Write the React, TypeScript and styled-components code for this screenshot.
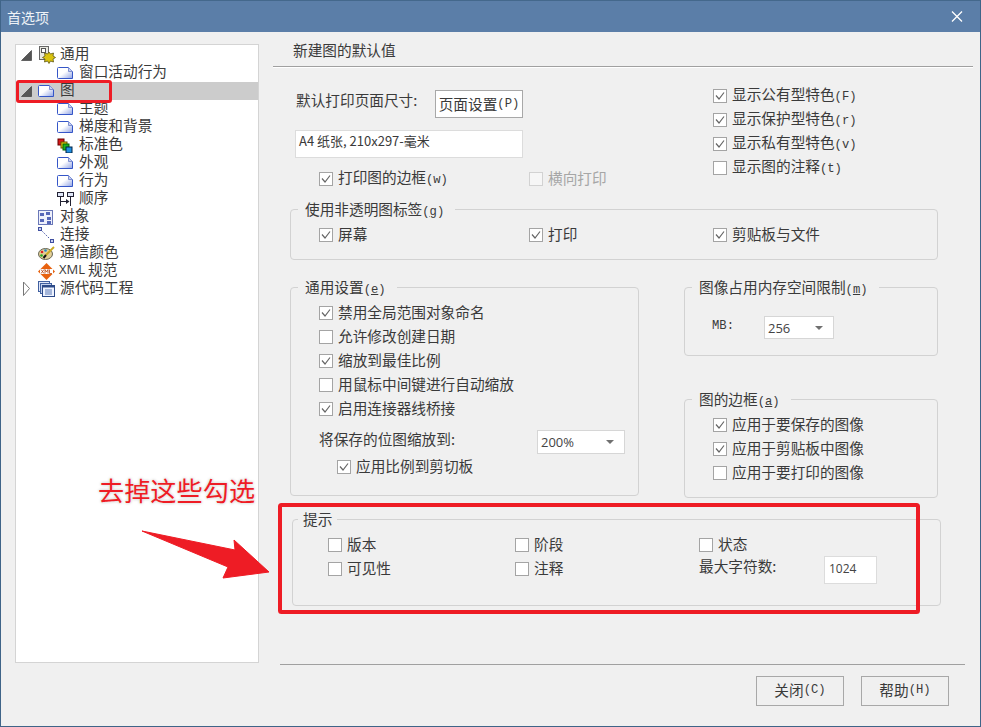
import React from "react";
import styled, { createGlobalStyle } from "styled-components";

const Global = createGlobalStyle`
  html, body { margin: 0; padding: 0; background: #f0f0f0; }
  * { box-sizing: border-box; }
`;

const CJK = `"Noto Sans CJK SC", "Liberation Sans", sans-serif`;

const Window = styled.div`
  position: relative;
  width: 981px;
  height: 727px;
  display: flex;
  flex-direction: column;
  background: #f0f0f0;
  border: 1px solid #3f6488;
  border-top-color: #44688c;
  font: 14.67px/18px ${CJK};
  color: #3a3a3a;
  overflow: hidden;
`;
const TitleBar = styled.div`
  height: 31px;
  flex: none;
  background: #5b7ea8;
  display: flex;
  align-items: center;
  justify-content: space-between;
  padding: 0 17px 0 6px;
  color: #eef2f7;
  font-size: 14px;
`;
const Body = styled.div`
  flex: 1;
  display: flex;
  align-items: flex-start;
`;
const Tree = styled.div`
  width: 244px;
  height: 619px;
  margin: 12px 0 0 14px;
  padding-top: 1px;
  background: #fff;
  border: 1px solid #d4d4d4;
  flex: none;
`;
const TreeRow = styled.div<{ $level: number; $selected?: boolean }>`
  height: 18px;
  display: flex;
  align-items: center;
  padding-left: ${(p) => (p.$level === 0 ? 5 : 41)}px;
  background: ${(p) => (p.$selected ? "#cccccc" : "transparent")};
  white-space: nowrap;
`;
const Expander = styled.span`
  width: 17px;
  height: 18px;
  flex: none;
  display: flex;
  align-items: center;
`;
const TreeIcon = styled.span`
  width: 18px;
  height: 18px;
  flex: none;
  display: flex;
  align-items: center;
  margin-right: 4px;
`;
const TreeLabel = styled.span`
  padding-bottom: 4px;
  display: flex;
  align-items: center;
`;
const Latin = styled.span`
  font-family: "Open Sans", sans-serif;
  font-size: 13px;
  margin: 0 3px 0 -1px;
  color: #3a3a3a;
`;

const Pane = styled.div`
  width: 700px;
  margin-left: 14px;
  flex: none;
`;
const Header = styled.div`
  height: 35px;
  padding: 9px 0 0 20px;
  border-bottom: 1px solid #a0a0a0;
  box-shadow: 0 1px 0 #fff;
`;
const TopGrid = styled.div`
  display: grid;
  grid-template-columns: 423px 1fr;
  margin-left: 17px;
`;
const PageColumn = styled.div`
  padding-top: 23px;
`;
const FlagColumn = styled.div`
  padding-top: 17px;
`;
const PageRow = styled.div`
  display: flex;
  align-items: center;
  padding-left: 6px;
`;
const PageLabel = styled.span`
  width: 139px;
  padding-bottom: 8px;
`;
const PageButton = styled.div`
  width: 88px;
  height: 28px;
  border: 1px solid #a8a8a8;
  background: #fff;
  display: flex;
  align-items: center;
  justify-content: center;
  white-space: nowrap;
  font-size: 14.67px;
`;
const PageInfo = styled.div`
  width: 228px;
  height: 28px;
  margin: 12px 0 0 5px;
  padding: 1px 3px;
  background: #fff;
  border: 1px solid #dcdcdc;
  font-size: 13px;
`;
const PrintRow = styled.div`
  display: grid;
  grid-template-columns: 210px 1fr;
  margin: 9px 0 8px 29px;
`;
const CheckRow = styled.div`
  height: 24px;
  display: flex;
  align-items: center;
  gap: 5px;
  white-space: nowrap;
`;
const Box = styled.span<{ $disabled?: boolean }>`
  width: 14px;
  height: 14px;
  flex: none;
  display: flex;
  align-items: center;
  justify-content: center;
  background: ${(p) => (p.$disabled ? "#f6f6f6" : "#fff")};
  border: 1px solid ${(p) => (p.$disabled ? "#d2d2d2" : "#a4a4a4")};
`;
const CheckLabel = styled.span<{ $disabled?: boolean }>`
  color: ${(p) => (p.$disabled ? "#a6a6a6" : "#3a3a3a")};
  padding-bottom: 2px;
`;
const Hot = styled.span`
  font-family: "Liberation Mono", monospace;
  font-size: 12.2px;
`;
const Group = styled.fieldset<{ $width: number; $left?: number }>`
  margin: 0 0 0 ${(p) => p.$left ?? 0}px;
  padding: 0;
  width: ${(p) => p.$width}px;
  min-width: 0;
  border: 1px solid #d2d2d2;
  border-radius: 4px;
`;
const GroupBody = styled.div<{ $pad: string }>`
  padding: ${(p) => p.$pad};
`;
const Legend = styled.legend`
  margin-left: 7px;
  padding: 0 11px 0 7px;
  height: 20px;
  line-height: 20px;
  white-space: nowrap;
`;
const TipsLegend = styled(Legend)`
  margin-left: 5px;
  padding: 0 5px 0 5px;
`;
const TransparentGroup = styled(Group)`
  grid-column: 1 / 3;
`;
const Columns = styled.div<{ $cols: string }>`
  display: grid;
  grid-template-columns: ${(p) => p.$cols};
`;
const MiddleRow = styled.div`
  display: flex;
  gap: 45px;
  margin: 17px 0 0 17px;
  align-items: flex-start;
`;
const SideColumn = styled.div`
  display: flex;
  flex-direction: column;
  gap: 33px;
`;
const ScaleRow = styled.div`
  display: flex;
  align-items: center;
  height: 24px;
  margin-top: 9px;
`;
const ScaleLabel = styled.span`
  width: 218px;
  padding-bottom: 6px;
`;
const Indented = styled.div`
  margin: 1px 0 0 18px;
`;
const Combo = styled.div<{ $width: number; $height: number }>`
  width: ${(p) => p.$width}px;
  height: ${(p) => p.$height}px;
  background: #fff;
  border: 1px solid #d6d6d6;
  display: flex;
  align-items: center;
  justify-content: space-between;
  padding: 0 10px 0 3px;
  font: 13px "Open Sans", sans-serif;
  color: #444;
`;
const Caret = styled.span`
  width: 0;
  height: 0;
  border-left: 4px solid transparent;
  border-right: 4px solid transparent;
  border-top: 4px solid #707070;
`;
const MemoryRow = styled.div`
  display: flex;
  align-items: center;
`;
const MemoryLabel = styled.span`
  width: 52px;
  font: 12.2px "Liberation Mono", monospace;
  padding-bottom: 4px;
`;
const TipsGroup = styled(Group)`
  margin-top: 11px;
`;
const CharsRow = styled.div`
  height: 24px;
  display: flex;
  align-items: center;
`;
const CharsLabel = styled.span`
  width: 125px;
  padding-bottom: 6px;
`;
const CharsInput = styled.div`
  width: 53px;
  height: 28px;
  margin-top: 2px;
  flex: none;
  background: #fff;
  border: 1px solid #dcdcdc;
  padding: 3px 4px;
  font: 12px/18px "Open Sans", sans-serif;
  color: #444;
`;
const Footer = styled.div`
  margin: 58px 0 0 7px;
  width: 685px;
  padding: 11px 16px 0 0;
  border-top: 1px solid #a0a0a0;
  display: flex;
  justify-content: flex-end;
  gap: 17px;
`;
const FootButton = styled.div`
  width: 88px;
  height: 30px;
  border: 1px solid #a8a8a8;
  display: flex;
  align-items: center;
  justify-content: center;
  white-space: nowrap;
  padding-bottom: 2px;
`;
const Overlay = styled.svg`
  position: absolute;
  left: -1px;
  top: -1px;
  pointer-events: none;
`;
const Annotation = styled.div`
  position: absolute;
  left: 97px;
  top: 471px;
  font: 26.2px/36px ${CJK};
  color: #ee1c25;
  text-shadow: 0 0 2px #fff, 0 0 3px #aaa;
  white-space: nowrap;
`;

const Tick = () => (
  <svg width="10" height="10" viewBox="0 0 10 10">
    <path d="M1 4.5 L4 8 L9 1.5" fill="none" stroke="#666" strokeWidth="1.2" />
  </svg>
);
const Check = ({ on, disabled, children }: { on?: boolean; disabled?: boolean; children: React.ReactNode }) => (
  <CheckRow>
    <Box $disabled={disabled}>{on && <Tick />}</Box>
    <CheckLabel $disabled={disabled}>{children}</CheckLabel>
  </CheckRow>
);
const Open = () => (
  <svg width="11" height="11" viewBox="0 0 11 11">
    <path d="M10.5 0.5 V10.5 H0.5 Z" fill="#555" stroke="#333" strokeWidth="0.6" />
  </svg>
);
const Closed = () => (
  <svg width="17" height="16" viewBox="0 0 17 16">
    <path d="M2.5 1 L8.5 7.5 L2.5 14.5 Z" fill="#fff" stroke="#777" />
  </svg>
);
const Note = () => (
  <svg width="16" height="12" viewBox="0 0 16 12">
    <defs>
      <linearGradient id="ng" x1="0" y1="0" x2="1" y2="1">
        <stop offset="0.45" stopColor="#fff" />
        <stop offset="1" stopColor="#8fa2e4" />
      </linearGradient>
    </defs>
    <path d="M1.5 .5 H11.5 L15.5 4.5 V11.5 H1.5 A1 1 0 0 1 .5 10.5 V1.5 A1 1 0 0 1 1.5 .5 Z" fill="url(#ng)" stroke="#3556c8" />
    <path d="M11.5 .5 V4.5 H15.5" fill="#c8d0ee" stroke="#7f8fd0" />
  </svg>
);
const GearIcon = () => (
  <svg width="18" height="18" viewBox="0 0 18 18">
    <rect x="1.5" y="0.5" width="9" height="13" fill="#e8e8e0" stroke="#666" />
    <rect x="3.5" y="2.5" width="4" height="4" fill="#fff" stroke="#555" />
    <path d="M11 6 L12.5 8 L15.5 7 L15 10 L17.5 11.5 L15 13 L15.5 16 L12.5 15 L11 17.5 L9.5 15 L6.5 16 L7 13 L4.5 11.5 L7 10 L6.5 7 L9.5 8 Z" fill="#d9c30f" stroke="#5d5510" strokeWidth="0.8" />
  </svg>
);
const ColorsIcon = () => (
  <svg width="16" height="15" viewBox="0 0 16 15">
    <rect x="1" y="1" width="6" height="6" fill="#d81818" stroke="#600" />
    <rect x="4" y="4" width="6" height="6" fill="#f0d010" stroke="#650" />
    <rect x="6" y="6" width="6" height="6" fill="#20b020" stroke="#060" />
    <rect x="9" y="9" width="6" height="6" fill="#2090e0" stroke="#024" />
  </svg>
);
const OrderIcon = () => (
  <svg width="17" height="15" viewBox="0 0 17 15">
    <rect x="0.5" y="0.5" width="6" height="4" fill="#dfe6f8" stroke="#223" />
    <rect x="10.5" y="0.5" width="6" height="4" fill="#dfe6f8" stroke="#223" />
    <path d="M3.5 5 V14 M13.5 5 V14 M3.5 9.5 H12" stroke="#223" fill="none" />
    <path d="M9 7 L12.5 9.5 L9 12 Z" fill="#223" />
  </svg>
);
const ObjectIcon = () => (
  <svg width="15" height="15" viewBox="0 0 15 15">
    <rect x="0.5" y="0.5" width="14" height="14" fill="#eef0fb" stroke="#6a78b8" />
    <rect x="2" y="3" width="4" height="3" fill="#5566b8" />
    <rect x="8" y="2" width="4" height="3" fill="#5566b8" />
    <rect x="2" y="9" width="4" height="3" fill="#5566b8" />
    <rect x="9" y="7" width="4" height="3" fill="#5566b8" />
    <rect x="9" y="11" width="4" height="3" fill="#5566b8" />
  </svg>
);
const LinkIcon = () => (
  <svg width="16" height="16" viewBox="0 0 16 16">
    <rect x="0.5" y="0.5" width="3" height="3" fill="#c8d0f0" stroke="#3f4fa0" />
    <rect x="12.5" y="12.5" width="3" height="3" fill="#c8d0f0" stroke="#3f4fa0" />
    <path d="M3.5 3.5 L12.5 12.5" stroke="#3f4fa0" strokeDasharray="1.5 1.5" />
  </svg>
);
const PaletteIcon = () => (
  <svg width="17" height="14" viewBox="0 0 17 14">
    <ellipse cx="7.5" cy="8" rx="7" ry="5.5" fill="#e3cf98" stroke="#665" />
    <circle cx="4" cy="6" r="1.3" fill="#d22" />
    <circle cx="7.5" cy="4.5" r="1.3" fill="#28c" />
    <circle cx="3.5" cy="9.5" r="1.3" fill="#2a2" />
    <path d="M8 9 L16 1" stroke="#c9a820" strokeWidth="1.8" />
    <path d="M8 9 L5.5 12" stroke="#111" strokeWidth="2" />
  </svg>
);
const XmlIcon = () => (
  <svg width="17" height="17" viewBox="0 0 17 17">
    <path d="M8.5 0 L17 8.5 L8.5 17 L0 8.5 Z" fill="#e8620f" />
    <rect x="2" y="6" width="13" height="5" fill="#fff" />
    <path d="M3 6.5 L6 10.5 M6 6.5 L3 10.5 M7 10.5 V6.5 L8.5 9 L10 6.5 V10.5 M11.5 6.5 V10.5 H14" stroke="#b8430a" fill="none" strokeWidth="0.8" />
  </svg>
);
const SourceIcon = () => (
  <svg width="17" height="16" viewBox="0 0 17 16">
    <rect x="0.5" y="0.5" width="11" height="10" fill="#dfe6f8" stroke="#4060a0" />
    <rect x="2.5" y="2.5" width="11" height="10" fill="#c4d2ee" stroke="#4060a0" />
    <rect x="4.5" y="4.5" width="12" height="11" fill="#eef3ff" stroke="#2c4a88" />
    <path d="M4.5 5.5 H16.5" stroke="#2c4a88" strokeWidth="2" />
    <path d="M7 9 H14 M7 11 H14 M7 13 H14" stroke="#5a78b4" />
  </svg>
);

type Item = { label: string; level: number; exp?: "open" | "closed"; icon: React.ReactNode; selected?: boolean; latin?: string };
const items: Item[] = [
  { label: "通用", level: 0, exp: "open", icon: <GearIcon /> },
  { label: "窗口活动行为", level: 1, icon: <Note /> },
  { label: "图", level: 0, exp: "open", icon: <Note />, selected: true },
  { label: "主题", level: 1, icon: <Note /> },
  { label: "梯度和背景", level: 1, icon: <Note /> },
  { label: "标准色", level: 1, icon: <ColorsIcon /> },
  { label: "外观", level: 1, icon: <Note /> },
  { label: "行为", level: 1, icon: <Note /> },
  { label: "顺序", level: 1, icon: <OrderIcon /> },
  { label: "对象", level: 0, icon: <ObjectIcon /> },
  { label: "连接", level: 0, icon: <LinkIcon /> },
  { label: "通信颜色", level: 0, icon: <PaletteIcon /> },
  { label: "规范", level: 0, icon: <XmlIcon />, latin: "XML" },
  { label: "源代码工程", level: 0, exp: "closed", icon: <SourceIcon /> },
];

export default function App() {
  return (
    <>
      <Global />
      <Window>
        <TitleBar>
          <span>首选项</span>
          <svg width="12" height="11" viewBox="0 0 12 11">
            <path d="M1 0.5 L11 10.5 M11 0.5 L1 10.5" stroke="#fff" strokeWidth="1.3" fill="none" />
          </svg>
        </TitleBar>
        <Body>
          <Tree>
            {items.map((it) => (
              <TreeRow key={it.label} $level={it.level} $selected={it.selected}>
                {it.level === 0 && (
                  <Expander>{it.exp === "open" ? <Open /> : it.exp === "closed" ? <Closed /> : null}</Expander>
                )}
                <TreeIcon>{it.icon}</TreeIcon>
                <TreeLabel>
                  {it.latin && <Latin>{it.latin}</Latin>}
                  {it.label}
                </TreeLabel>
              </TreeRow>
            ))}
          </Tree>
          <Pane>
            <Header>新建图的默认值</Header>
            <TopGrid>
              <PageColumn>
                <PageRow>
                  <PageLabel>默认打印页面尺寸:</PageLabel>
                  <PageButton>页面设置<Hot>(P)</Hot></PageButton>
                </PageRow>
                <PageInfo>A4 纸张, 210x297-毫米</PageInfo>
                <PrintRow>
                  <Check on>打印图的边框<Hot>(w)</Hot></Check>
                  <Check disabled>横向打印</Check>
                </PrintRow>
              </PageColumn>
              <FlagColumn>
                <Check on>显示公有型特色<Hot>(F)</Hot></Check>
                <Check on>显示保护型特色<Hot>(r)</Hot></Check>
                <Check on>显示私有型特色<Hot>(v)</Hot></Check>
                <Check>显示图的注释<Hot>(t)</Hot></Check>
              </FlagColumn>
              <TransparentGroup $width={648}>
                <Legend>使用非透明图标签<Hot>(<u>g</u>)</Hot></Legend>
                <GroupBody $pad="4px 0 12px 28px">
                  <Columns $cols="210px 184px 1fr">
                    <Check on>屏幕</Check>
                    <Check on>打印</Check>
                    <Check on>剪贴板与文件</Check>
                  </Columns>
                </GroupBody>
              </TransparentGroup>
            </TopGrid>
            <MiddleRow>
              <Group $width={349}>
                <Legend>通用设置<Hot>(<u>e</u>)</Hot></Legend>
                <GroupBody $pad="4px 0 16px 28px">
                  <Check on>禁用全局范围对象命名</Check>
                  <Check>允许修改创建日期</Check>
                  <Check on>缩放到最佳比例</Check>
                  <Check>用鼠标中间键进行自动缩放</Check>
                  <Check on>启用连接器线桥接</Check>
                  <ScaleRow>
                    <ScaleLabel>将保存的位图缩放到:</ScaleLabel>
                    <Combo $width={88} $height={24}>200%<Caret /></Combo>
                  </ScaleRow>
                  <Indented>
                    <Check on>应用比例到剪切板</Check>
                  </Indented>
                </GroupBody>
              </Group>
              <SideColumn>
                <Group $width={254}>
                  <Legend>图像占用内存空间限制<Hot>(<u>m</u>)</Hot></Legend>
                  <GroupBody $pad="19px 0 16px 27px">
                    <MemoryRow>
                      <MemoryLabel>MB:</MemoryLabel>
                      <Combo $width={70} $height={23}>256<Caret /></Combo>
                    </MemoryRow>
                  </GroupBody>
                </Group>
                <Group $width={254}>
                  <Legend>图的边框<Hot>(<u>a</u>)</Hot></Legend>
                  <GroupBody $pad="4px 0 12px 28px">
                    <Check on>应用于要保存的图像</Check>
                    <Check on>应用于剪贴板中图像</Check>
                    <Check>应用于要打印的图像</Check>
                  </GroupBody>
                </Group>
              </SideColumn>
            </MiddleRow>
            <TipsGroup $width={649} $left={19}>
              <TipsLegend>提示</TipsLegend>
              <GroupBody $pad="4px 0 24px 35px">
                <Columns $cols="187px 184px 1fr">
                  <Check>版本</Check>
                  <Check>阶段</Check>
                  <Check>状态</Check>
                  <Check>可见性</Check>
                  <Check>注释</Check>
                  <CharsRow>
                    <CharsLabel>最大字符数:</CharsLabel>
                    <CharsInput>1024</CharsInput>
                  </CharsRow>
                </Columns>
              </GroupBody>
            </TipsGroup>
            <Footer>
              <FootButton>关闭<Hot>(C)</Hot></FootButton>
              <FootButton>帮助<Hot>(H)</Hot></FootButton>
            </Footer>
          </Pane>
        </Body>
        <Overlay width="981" height="727" viewBox="0 0 981 727">
          <rect x="17.5" y="81.5" width="93" height="20" rx="1.5" fill="none" stroke="#ee1c25" strokeWidth="3" />
          <rect x="280" y="505" width="638" height="107" rx="1.5" fill="none" stroke="#ee1c25" strokeWidth="4" />
          <path d="M142 531 L235 550 L234 540 L269 572 L223 578 L228 567 Z" fill="#ee1c25" stroke="#ee1c25" strokeLinejoin="round" />
        </Overlay>
        <Annotation>去掉这些勾选</Annotation>
      </Window>
    </>
  );
}
